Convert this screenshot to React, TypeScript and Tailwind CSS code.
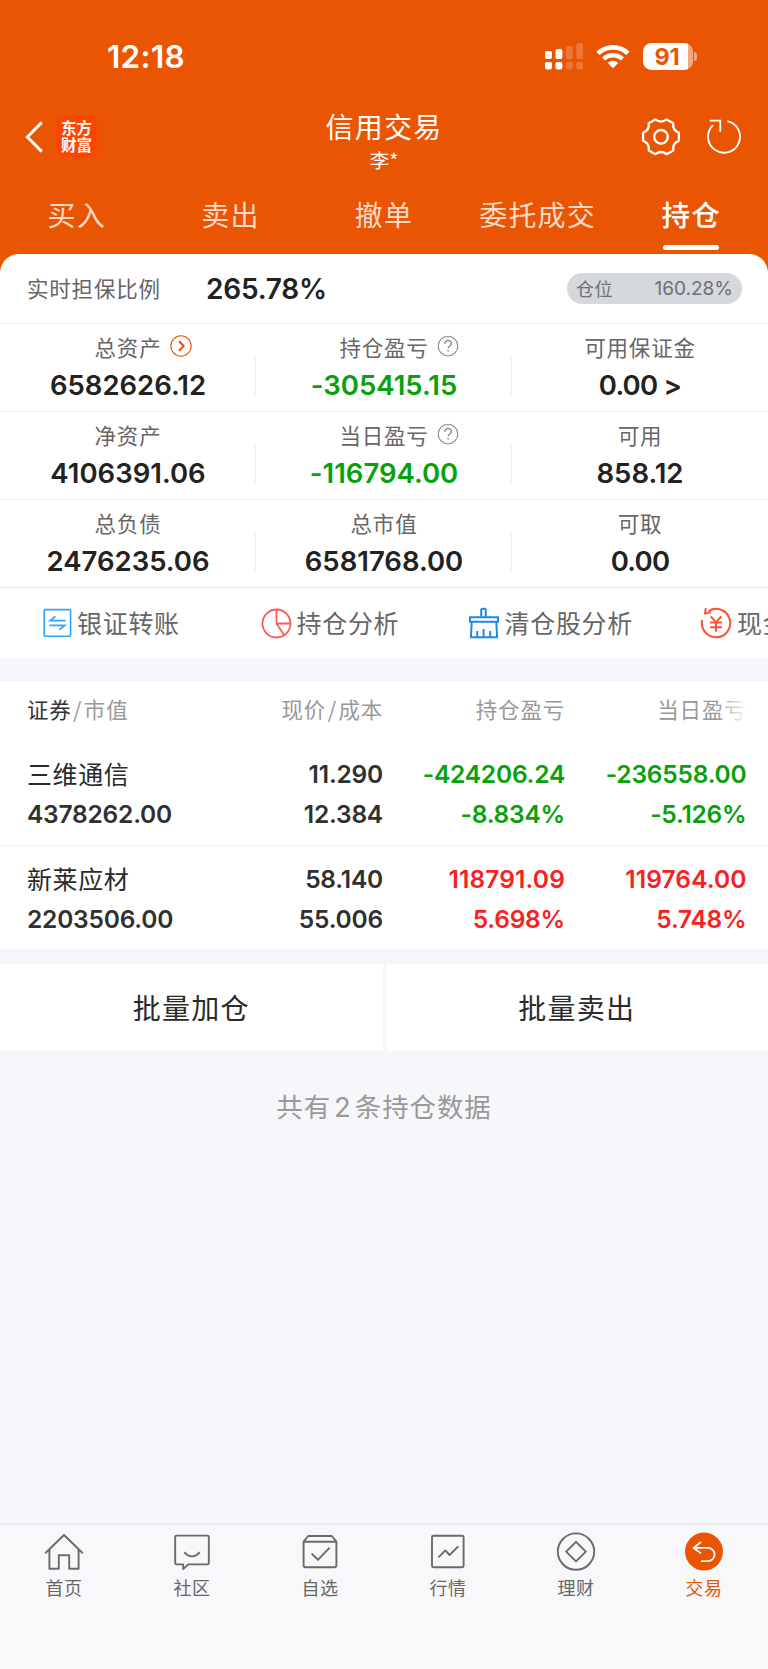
import React from "react";

const cjk = "font-['Noto_Sans_CJK_SC',sans-serif]";

type Metric = { label: string; value: string; tone?: "green"; mark?: "go" | "help"; tight?: boolean };

const metrics: Metric[][] = [
  [
    { label: "总资产", value: "6582626.12", mark: "go" },
    { label: "持仓盈亏", value: "-305415.15", tone: "green", mark: "help" },
    { label: "可用保证金", value: "0.00 >", tight: true },
  ],
  [
    { label: "净资产", value: "4106391.06" },
    { label: "当日盈亏", value: "-116794.00", tone: "green", mark: "help" },
    { label: "可用", value: "858.12" },
  ],
  [
    { label: "总负债", value: "2476235.06" },
    { label: "总市值", value: "6581768.00" },
    { label: "可取", value: "0.00", tight: true },
  ],
];

const holdings = [
  { name: "三维通信", cap: "4378262.00", price: "11.290", cost: "12.384", pl: "-424206.24", plp: "-8.834%", day: "-236558.00", dayp: "-5.126%", up: false },
  { name: "新莱应材", cap: "2203506.00", price: "58.140", cost: "55.006", pl: "118791.09", plp: "5.698%", day: "119764.00", dayp: "5.748%", up: true },
];

function StatusBar() {
  return (
    <div className="flex h-[104px] items-start pt-[37px]">
      <div className="ml-[107px] w-[100px] text-[31.5px] leading-[40px] font-semibold tracking-[0.3px]">12:18</div>
      <svg className="mt-[6px] ml-[338px]" width="38" height="27" viewBox="0 0 38 27" fill="#fff">
        <rect x="0" y="8" width="7" height="8" rx="2" />
        <rect x="10.4" y="6" width="7" height="10" rx="2" />
        <rect x="20.8" y="3" width="7" height="13" rx="2" opacity=".2" />
        <rect x="31.2" y="0" width="7" height="16" rx="2" opacity=".2" />
        <rect x="0" y="19" width="7" height="7.5" rx="2" />
        <rect x="10.4" y="19" width="7" height="7.5" rx="2" />
        <rect x="20.8" y="19" width="7" height="7.5" rx="2" opacity=".2" />
        <rect x="31.2" y="19" width="7" height="7.5" rx="2" opacity=".2" />
      </svg>
      <svg className="mt-[7px] ml-[13px]" width="34" height="25" viewBox="0 0 34 25" fill="none" stroke="#fff">
        <path d="M2 9.4a21.6 21.6 0 0 1 30 0" strokeWidth="4.6" />
        <path d="M7.6 15a13.6 13.6 0 0 1 18.8 0" strokeWidth="4.4" />
        <path d="M17 24.2l-5.2-5.3a7.6 7.6 0 0 1 10.4 0z" fill="#fff" stroke="none" />
      </svg>
      <div className="mt-[6px] ml-[12.5px] flex items-center">
        <div className="flex h-[27px] w-[50px] items-center justify-center rounded-[8.5px] bg-[linear-gradient(90deg,#fff_0_45px,#f5a67d_45px)] pt-px pr-px text-[23.5px] leading-none font-bold tracking-[-0.3px] text-[#ea5504]">
          91
        </div>
        <div className="ml-[1.5px] h-[9px] w-[3px] rounded-r-full bg-[#f5a67d]" />
      </div>
    </div>
  );
}

function Header() {
  return (
    <div className="grid h-[66px] grid-cols-[1fr_auto_1fr]">
      <div className="flex items-start pt-[12px] pl-[24px]">
        <svg className="mt-[5px]" width="20" height="32" viewBox="0 0 20 32" fill="none" stroke="#fff" strokeWidth="3">
          <path d="M17.8 1.4L3.4 16l14.4 14.6" />
        </svg>
        <div className={`ml-[12px] flex size-[41px] flex-col items-center justify-center rounded-[8px] bg-[#ff4400] pb-[2px] text-[15.5px] leading-[17px] font-bold ${cjk}`}>
          <span>东方</span>
          <span>财富</span>
        </div>
      </div>
      <div className={`flex flex-col items-center ${cjk}`}>
        <div className="mt-[2px] text-[28px] leading-[40px] tracking-[1.2px]">信用交易</div>
        <div className="mt-[1px] text-[19.5px] leading-[26px]">李*</div>
      </div>
      <div className="flex items-start justify-end pt-[12px] pr-[25px]">
        <svg width="42" height="42" viewBox="0 0 42 42" fill="none" stroke="#fff" strokeWidth="2.3" strokeLinejoin="round">
          <path d="M15.4 3.4Q21 7.8 26.6 3.4L33.2 7.2Q32.3 14.3 38.9 16.9V24.7Q32.3 27.3 33.2 34.4L26.6 38.2Q21 33.8 15.4 38.2L8.8 34.4Q9.7 27.3 3.1 24.7V16.9Q9.7 14.3 8.8 7.2Z" />
          <circle cx="21" cy="20.8" r="6.8" />
        </svg>
        <svg className="ml-[23.5px]" width="38" height="42" viewBox="0 0 38 42" fill="none" stroke="#fff" strokeWidth="1.8">
          <path d="M22.3 5.05A16 16 0 1 1 8 9.1" />
          <path d="M4.7 4.7H15.3V15.7" />
        </svg>
      </div>
    </div>
  );
}

function TopTabs() {
  const tabs = ["买入", "卖出", "撤单", "委托成交", "持仓"];
  return (
    <div className={`grid h-[84px] grid-cols-5 text-center text-[28px] tracking-[1.2px] ${cjk}`}>
      {tabs.map((t, i) => (
        <div key={t} className="flex flex-col items-center">
          <div className={i === 4 ? "mt-[23px] text-[28.5px] leading-[42px] font-medium" : "mt-[23px] leading-[42px] text-[#fddac6]"}>{t}</div>
          {i === 4 && <div className="mt-[10px] h-[5px] w-[56px] rounded-full bg-white" />}
        </div>
      ))}
    </div>
  );
}

function GoIcon() {
  return (
    <svg className="absolute top-[2px] left-full ml-[9px]" width="22" height="22" viewBox="0 0 22 22" fill="none" stroke="#ea5504">
      <circle cx="11" cy="11" r="10.2" strokeWidth="1.1" />
      <path d="M9 6.3L13.7 11 9 15.7" strokeWidth="2" />
    </svg>
  );
}

function HelpIcon() {
  return (
    <svg className="absolute top-[2px] left-full ml-[8.5px]" width="22" height="22" viewBox="0 0 22 22" fill="none" stroke="#888">
      <circle cx="11" cy="11" r="9.8" strokeWidth="1.1" />
      <path d="M7.8 9c0-2 1.4-3.3 3.3-3.3s3.3 1.2 3.3 2.9c0 2.3-3.2 2.4-3.2 4.9" strokeWidth="1.3" />
      <path d="M11.1 15v1.6" strokeWidth="1.5" />
    </svg>
  );
}

function Summary() {
  return (
    <section className="rounded-t-[19px] bg-white">
      <div className="flex h-[69px] items-center pl-[27px]">
        <span className={`w-[179px] text-[21.5px] tracking-[0.8px] text-[#666] ${cjk}`}>实时担保比例</span>
        <span className="pt-px text-[28px] font-semibold tracking-[-0.2px] text-[#222]">265.78%</span>
        <div className="mr-[26px] ml-auto flex h-[31px] w-[175px] items-center justify-between rounded-full bg-[#d5d8dd] px-[9px] text-[#6f6f6f]">
          <span className={`pb-[2px] text-[18px] leading-[26px] tracking-[0.6px] ${cjk}`}>仓位</span>
          <span className="pt-px text-[19px]">160.28%</span>
        </div>
      </div>
      {metrics.map((row, r) => (
        <div key={r} className="grid h-[88px] grid-cols-3 border-t border-[#eeeff1]">
          {row.map((m, c) => (
            <div key={m.label} className="relative flex flex-col items-center pt-[9px]">
              <div className={`relative text-[21.5px] leading-[28px] tracking-[0.8px] text-[#666] ${cjk}`}>
                {m.label}
                {m.mark === "go" && <GoIcon />}
                {m.mark === "help" && <HelpIcon />}
              </div>
              <div className={`mt-[6px] text-[27.5px] leading-[36px] font-semibold [font-feature-settings:'calt'_0] ${m.tone ? "text-[#07a10b]" : "text-[#222]"} ${m.tight ? "tracking-[-0.8px]" : ""}`}>{m.value}</div>
              {c < 2 && <div className="absolute top-[33px] right-0 h-[38px] w-px bg-[#ebebee]" />}
            </div>
          ))}
        </div>
      ))}
    </section>
  );
}

function Shortcuts() {
  return (
    <section className={`flex h-[71px] items-center overflow-hidden border-t border-[#e9eaec] bg-white pl-[43px] text-[25px] tracking-[0.7px] whitespace-nowrap text-[#666] ${cjk}`}>
      <div className="flex w-[218px] shrink-0 items-center gap-[5px]">
        <svg width="29" height="30" viewBox="0 0 29 30" fill="none" stroke="#2ea3ff" strokeWidth="1.6">
          <rect x="1.2" y="1.6" width="26.4" height="26.6" rx="1.2" />
          <path d="M22.6 12.7H7.2L12.4 8.4M6.3 17.3H21.7L16.5 21.6" strokeWidth="1.8" />
        </svg>
        <span>银证转账</span>
      </div>
      <div className="flex w-[207px] shrink-0 items-center gap-[4.5px]">
        <svg width="31" height="31" viewBox="0 0 31 31" fill="none" stroke="#ff5a5a" strokeWidth="1.8">
          <circle cx="15.5" cy="15.5" r="14" />
          <path d="M15.5 1.5V15.5H29.5M15.5 15.5L23 27" />
        </svg>
        <span>持仓分析</span>
      </div>
      <div className="flex w-[232px] shrink-0 items-center gap-[4.5px]">
        <svg width="32" height="32" viewBox="0 0 32 32" fill="none" stroke="#1c86f2" strokeWidth="2" strokeLinejoin="round">
          <path d="M13.2 10.2V3.2a1.5 1.5 0 0 1 1.5-1.5h1.6a1.5 1.5 0 0 1 1.5 1.5v7M1.9 10.2h28.2v4.5H1.9zM3.7 14.7L2.9 30.2h26.2l-.8-15.5M9.3 30v-6M15.6 30v-8M22.2 30v-6" />
        </svg>
        <span>清仓股分析</span>
      </div>
      <div className="flex shrink-0 items-center gap-[5px]">
        <svg width="32" height="32" viewBox="0 0 32 32" fill="none" stroke="#ff5036" strokeWidth="2">
          <path d="M2.2 13A14.2 14.2 0 1 0 8.6 4" />
          <path d="M5.8 1.2L5 6.6 11 5" strokeLinejoin="round" />
          <path d="M10.8 9.3l5.2 6 5.2-6M16 15.3v9.5M10 15.6h12M10 20.2h12" />
        </svg>
        <span>现金宝</span>
      </div>
    </section>
  );
}

const cols = "grid grid-cols-[200px_156px_182px_181.5px] pl-[27px]";

function Holdings() {
  return (
    <section className="mt-[23px] bg-white">
      <div className={`${cols} relative h-[59px] pt-[14px] text-right text-[21.5px] leading-[28px] tracking-[0.8px] text-[#999] ${cjk}`}>
        <div className="text-left"><span className="text-[#333]">证券</span><span className="px-[1.5px]">/</span>市值</div>
        <div>现价<span className="px-[1.5px]">/</span>成本</div>
        <div>持仓盈亏</div>
        <div>当日盈亏</div>
        <div className="absolute top-0 right-0 h-full w-[52px] bg-linear-to-r from-white/0 via-white/80 to-white" />
      </div>
      {holdings.map((h, i) => (
        <div key={h.name} className={`${cols} ${i ? "h-[104px] border-t border-[#f0f1f3] pt-[13px]" : "h-[105px] pt-[14px]"} text-right text-[24.5px] leading-[40px] font-semibold tracking-[-0.2px] text-[#303030] [font-feature-settings:'calt'_0]`}>
          <div className="text-left">
            <div className={`-mt-px mb-px text-[25px] font-normal tracking-[0.6px] text-[#2a2a2a] ${cjk}`}>{h.name}</div>
            <div>{h.cap}</div>
          </div>
          <div>
            <div>{h.price}</div>
            <div>{h.cost}</div>
          </div>
          <div className={h.up ? "text-[#f9211f]" : "text-[#07a10b]"}>
            <div className={h.up ? "tracking-[0.15px]" : ""}>{h.pl}</div>
            <div>{h.plp}</div>
          </div>
          <div className={h.up ? "text-[#f9211f]" : "text-[#07a10b]"}>
            <div className={h.up ? "tracking-[0.1px]" : ""}>{h.day}</div>
            <div>{h.dayp}</div>
          </div>
        </div>
      ))}
    </section>
  );
}

const line = { fill: "none", stroke: "#6a6a6d", strokeWidth: 1.9, strokeLinejoin: "round" as const };

const navItems = [
  { label: "首页", icon: <g {...line}><path d="M1.2 20.2L20 2l18.8 18.2M5.4 16.8V35.8h9.4V22.2h10.4v13.6h9.4V16.8" /></g> },
  { label: "社区", icon: <g {...line}><path d="M4.6 2.6h30.8a1.4 1.4 0 0 1 1.4 1.4v26a1.4 1.4 0 0 1-1.4 1.4H16.4l-5.2 4.6v-4.6H4.6A1.4 1.4 0 0 1 3.2 30V4a1.4 1.4 0 0 1 1.4-1.4zM12.3 19.2q7.7 8.6 15.4 0" /></g> },
  { label: "自选", icon: <g {...line}><path d="M3.6 8.6L8.2 3h23.6l4.6 5.6v23.6a2 2 0 0 1-2 2H5.6a2 2 0 0 1-2-2zM3.6 8.8h32.8M11.6 20.6l6.4 6.2 11.6-12.2" /></g> },
  { label: "行情", icon: <g {...line}><rect x="4" y="2.8" width="31.6" height="31.4" rx="1.4" /><path d="M10.4 24.4l7-7 4.2 4.6 8.6-8.6" /></g> },
  { label: "理财", icon: <g {...line}><circle cx="20" cy="18.6" r="18.2" /><path d="M20 8.8l9.8 9.8-9.8 9.8-9.8-9.8z" /></g> },
  { label: "交易", icon: <g><circle cx="20" cy="18.6" r="19" fill="#ea5504" /><path d="M17 9L9.6 14.9L17 20.4M9.6 14.9H24a6.6 6.6 0 0 1 0 13.2H17" fill="none" stroke="#fff" strokeWidth="1.8" /></g> },
];

export default function App() {
  return (
    <div className="flex h-[1669px] w-[768px] flex-col overflow-hidden bg-[#f6f7fa] font-['Inter','Noto_Sans_CJK_SC',sans-serif]">
      <div className="h-[254px] shrink-0 bg-[#ea5504] text-white">
        <StatusBar />
        <Header />
        <TopTabs />
      </div>
      <div className="bg-[linear-gradient(#ea5504_0_40px,transparent_40px)]">
        <Summary />
      </div>
      <Shortcuts />
      <Holdings />
      <div className={`mt-[15px] grid h-[87px] grid-cols-2 gap-[3px] text-[28px] tracking-[1.2px] text-[#2a2a2a] ${cjk}`}>
        <button className="bg-white pb-[2px]">批量加仓</button>
        <button className="bg-white pb-[2px]">批量卖出</button>
      </div>
      <p className={`mt-[35px] text-center text-[26.5px] leading-[40px] tracking-[0.9px] text-[#999] ${cjk}`}>
        共有<span className="px-[3px] font-['Inter'] text-[27.5px]">2</span>条持仓数据
      </p>
      <nav className="mt-auto grid h-[146px] grid-cols-6 border-t-2 border-[#e9ebef] bg-[#f8f8fb]">
        {navItems.map((n, i) => (
          <div key={n.label} className="flex flex-col items-center pt-[8px]">
            <svg width="40" height="40" viewBox="0 0 40 40" className="overflow-visible">{n.icon}</svg>
            <span className={`mt-px text-[18px] leading-[26px] tracking-[0.6px] ${cjk} ${i === 5 ? "text-[#ea5504]" : "text-[#666]"}`}>{n.label}</span>
          </div>
        ))}
      </nav>
    </div>
  );
}
